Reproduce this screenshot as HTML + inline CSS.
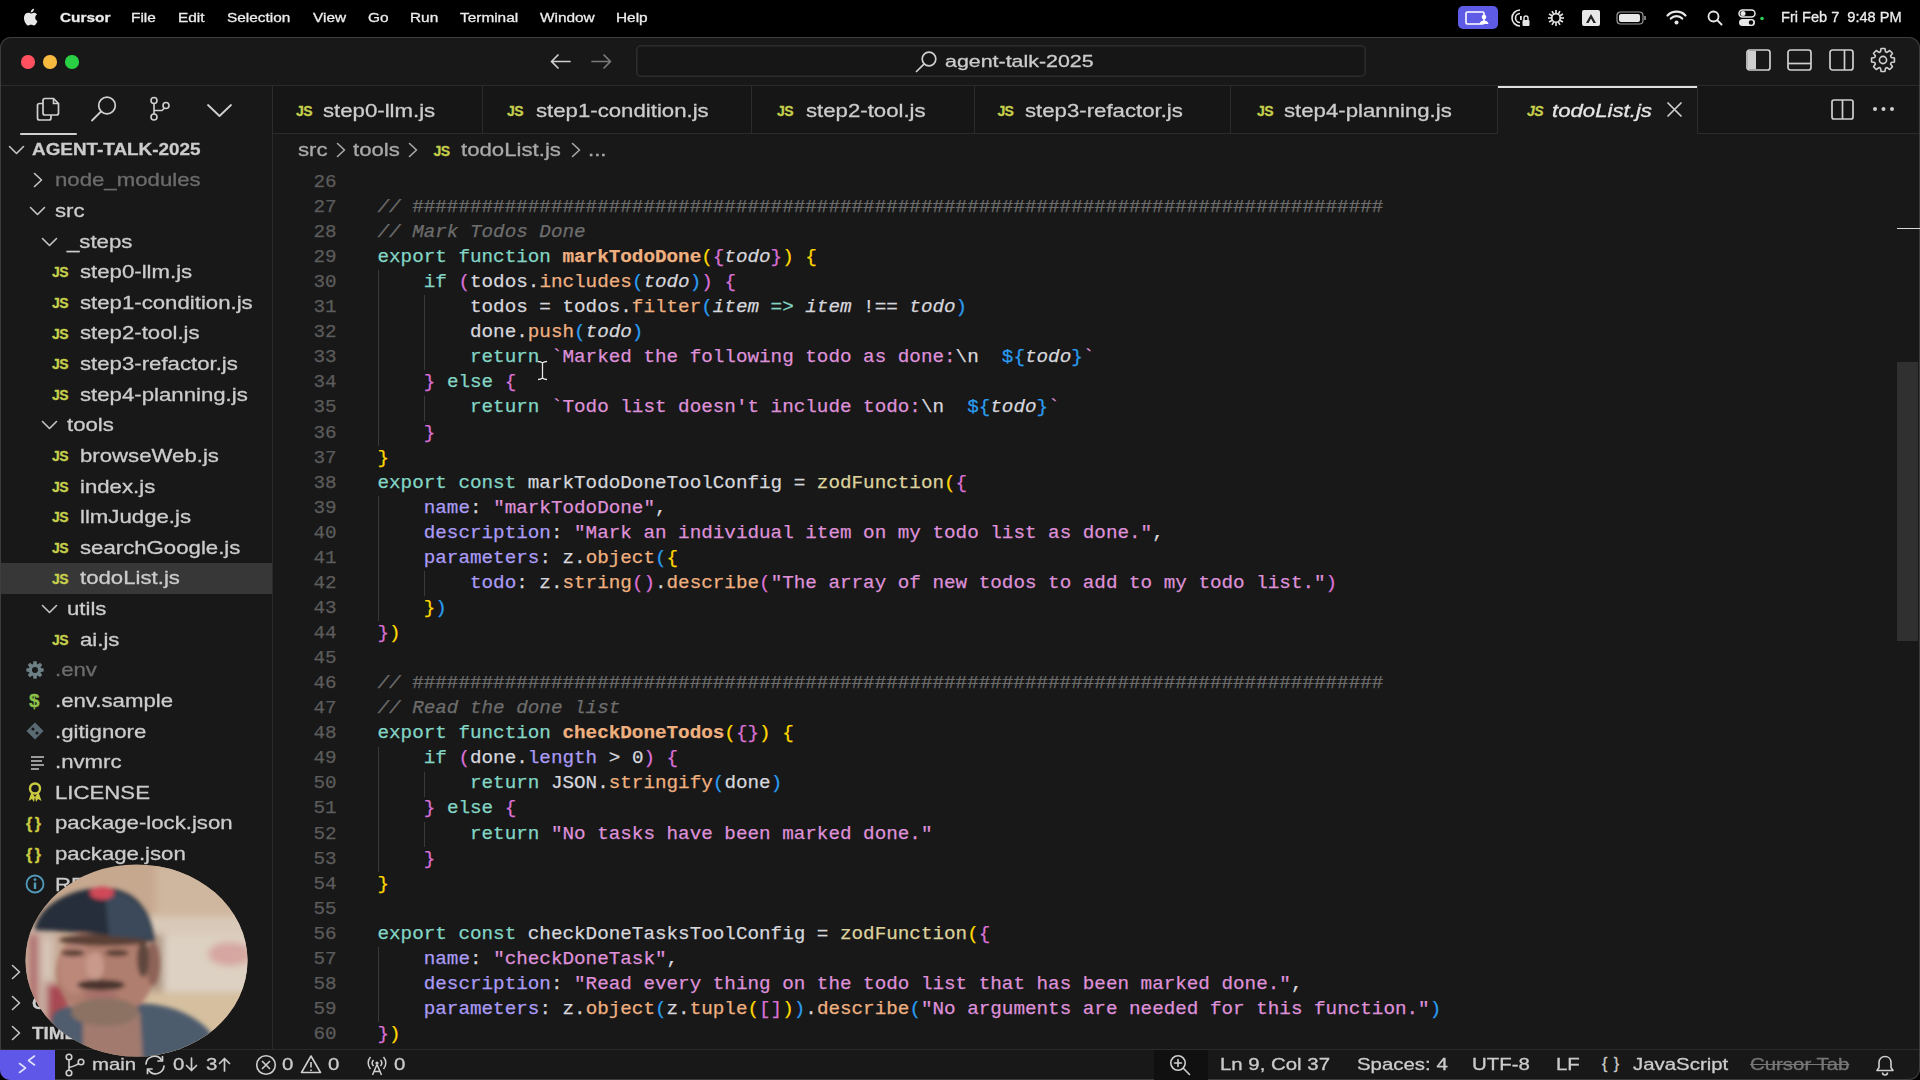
<!DOCTYPE html><html><head><meta charset="utf-8"><title>Cursor</title><style>
*{margin:0;padding:0;box-sizing:border-box;}
html,body{width:1920px;height:1080px;overflow:hidden;background:#000;}
body{position:relative;font-family:"Liberation Sans", sans-serif;}
.a{position:absolute;white-space:nowrap;transform-origin:0 50%;}
div.a{-webkit-text-stroke:0.3px currentColor;}
svg.a{overflow:visible;}
.code{-webkit-text-stroke:0.25px currentColor;font-family:"Liberation Mono", monospace;font-size:19.28px;line-height:25.07px;white-space:pre;color:#d6d6dd;}
.i{font-style:italic;}
.b{font-weight:700;}
</style></head><body><div class="a" style="left:0px;top:0px;width:1920px;height:38px;background:#000;"></div>
<svg class="a" style="left:22px;top:8px;" width="16" height="18" viewBox="0 0 16 18" fill="none"><path fill="#e8e8e8" d="M13.2 9.6c0-2.1 1.7-3.1 1.8-3.2-1-1.4-2.5-1.6-3-1.7-1.3-.1-2.5.8-3.1.8-.7 0-1.7-.8-2.8-.7C4.7 4.8 3.4 5.6 2.7 6.9c-1.5 2.6-.4 6.4 1.1 8.5.7 1 1.5 2.2 2.6 2.1 1 0 1.4-.7 2.7-.7 1.2 0 1.6.7 2.7.7 1.1 0 1.8-1 2.5-2 .8-1.2 1.1-2.3 1.1-2.4 0 0-2.2-.8-2.2-3.5zM11.1 3.3c.6-.7 1-1.7.9-2.6-.8 0-1.8.5-2.4 1.2-.5.6-1 1.6-.9 2.6.9.1 1.8-.5 2.4-1.2z"/></svg>
<div class="a" style="left:60.00px;top:10.87px;font-size:13.5px;line-height:13.5px;color:#ececec;font-weight:700;font-style:normal;transform:scaleX(1.14);">Cursor</div>
<div class="a" style="left:131.00px;top:10.87px;font-size:13.5px;line-height:13.5px;color:#ececec;font-weight:400;font-style:normal;transform:scaleX(1.14);">File</div>
<div class="a" style="left:178.00px;top:10.87px;font-size:13.5px;line-height:13.5px;color:#ececec;font-weight:400;font-style:normal;transform:scaleX(1.14);">Edit</div>
<div class="a" style="left:227.00px;top:10.87px;font-size:13.5px;line-height:13.5px;color:#ececec;font-weight:400;font-style:normal;transform:scaleX(1.14);">Selection</div>
<div class="a" style="left:313.00px;top:10.87px;font-size:13.5px;line-height:13.5px;color:#ececec;font-weight:400;font-style:normal;transform:scaleX(1.14);">View</div>
<div class="a" style="left:368.00px;top:10.87px;font-size:13.5px;line-height:13.5px;color:#ececec;font-weight:400;font-style:normal;transform:scaleX(1.14);">Go</div>
<div class="a" style="left:410.00px;top:10.87px;font-size:13.5px;line-height:13.5px;color:#ececec;font-weight:400;font-style:normal;transform:scaleX(1.14);">Run</div>
<div class="a" style="left:460.00px;top:10.87px;font-size:13.5px;line-height:13.5px;color:#ececec;font-weight:400;font-style:normal;transform:scaleX(1.14);">Terminal</div>
<div class="a" style="left:539.50px;top:10.87px;font-size:13.5px;line-height:13.5px;color:#ececec;font-weight:400;font-style:normal;transform:scaleX(1.14);">Window</div>
<div class="a" style="left:615.60px;top:10.87px;font-size:13.5px;line-height:13.5px;color:#ececec;font-weight:400;font-style:normal;transform:scaleX(1.14);">Help</div>
<div class="a" style="left:1458px;top:6px;width:40px;height:23px;background:#5e5ce6;border-radius:5px;"></div>
<svg class="a" style="left:1465px;top:11px;" width="26" height="14" viewBox="0 0 26 14" fill="none"><rect x="1" y="1" width="18" height="12" rx="1.5" stroke="#fff" stroke-width="1.6"/><circle cx="19" cy="6" r="2.3" fill="#fff"/><path d="M14.5 13c.5-2.5 2.3-3.6 4.5-3.6s4 1.1 4.5 3.6z" fill="#fff"/></svg>
<svg class="a" style="left:1510px;top:8px;" width="21" height="20" viewBox="0 0 21 20" fill="none"><path d="M10 2a8 8 0 1 0 0 16" stroke="#e6e6e6" stroke-width="1.6"/><path d="M10 5.5a4.5 4.5 0 1 0 0 9" stroke="#e6e6e6" stroke-width="1.6"/><rect x="10" y="8" width="1.8" height="4" fill="#e6e6e6"/><rect x="12.5" y="12" width="7" height="6" rx="1" fill="#e6e6e6"/><path d="M14 12v-2a2 2 0 0 1 4 0v2" stroke="#e6e6e6" stroke-width="1.4"/></svg>
<svg class="a" style="left:1547px;top:9px;" width="18" height="18" viewBox="0 0 18 18" fill="none"><line x1="9" y1="9" x2="17.00" y2="9.00" stroke="#e6e6e6" stroke-width="1.6"/><line x1="9" y1="9" x2="15.93" y2="13.00" stroke="#e6e6e6" stroke-width="1.6"/><line x1="9" y1="9" x2="13.00" y2="15.93" stroke="#e6e6e6" stroke-width="1.6"/><line x1="9" y1="9" x2="9.00" y2="17.00" stroke="#e6e6e6" stroke-width="1.6"/><line x1="9" y1="9" x2="5.00" y2="15.93" stroke="#e6e6e6" stroke-width="1.6"/><line x1="9" y1="9" x2="2.07" y2="13.00" stroke="#e6e6e6" stroke-width="1.6"/><line x1="9" y1="9" x2="1.00" y2="9.00" stroke="#e6e6e6" stroke-width="1.6"/><line x1="9" y1="9" x2="2.07" y2="5.00" stroke="#e6e6e6" stroke-width="1.6"/><line x1="9" y1="9" x2="5.00" y2="2.07" stroke="#e6e6e6" stroke-width="1.6"/><line x1="9" y1="9" x2="9.00" y2="1.00" stroke="#e6e6e6" stroke-width="1.6"/><line x1="9" y1="9" x2="13.00" y2="2.07" stroke="#e6e6e6" stroke-width="1.6"/><line x1="9" y1="9" x2="15.93" y2="5.00" stroke="#e6e6e6" stroke-width="1.6"/><circle cx="9" cy="9" r="4.2" fill="#000" stroke="#e6e6e6" stroke-width="1.6"/></svg>
<div class="a" style="left:1582px;top:10px;width:18px;height:16px;background:#e8e8e8;border-radius:2px;"></div>
<svg class="a" style="left:1584px;top:12px;" width="14" height="12" viewBox="0 0 14 12" fill="none"><path d="M2 11 L7 2 L12 11 L9.5 11 L7 6.5 L4.5 11z" fill="#222"/></svg>
<svg class="a" style="left:1616px;top:11px;" width="32" height="14" viewBox="0 0 32 14" fill="none"><rect x="1" y="1" width="26" height="12" rx="3.5" stroke="#9a9a9a" stroke-width="1.2"/><rect x="3" y="3" width="21" height="8" rx="2" fill="#e8e8e8"/><path d="M29 5v4" stroke="#9a9a9a" stroke-width="1.6"/></svg>
<svg class="a" style="left:1666px;top:9px;" width="21" height="16" viewBox="0 0 21 16" fill="none"><path d="M1.5 6.5a12.5 12.5 0 0 1 18 0" stroke="#e8e8e8" stroke-width="2.2" stroke-linecap="round"/><path d="M4.8 9.6a7.6 7.6 0 0 1 11.4 0" stroke="#e8e8e8" stroke-width="2.2" stroke-linecap="round"/><circle cx="10.5" cy="13.5" r="2" fill="#e8e8e8"/></svg>
<svg class="a" style="left:1707px;top:10px;" width="16" height="16" viewBox="0 0 16 16" fill="none"><circle cx="6.5" cy="6.5" r="5" stroke="#e8e8e8" stroke-width="1.8"/><path d="M10.2 10.2L14.5 14.5" stroke="#e8e8e8" stroke-width="1.9" stroke-linecap="round"/></svg>
<svg class="a" style="left:1738px;top:9px;" width="30" height="18" viewBox="0 0 30 18" fill="none"><rect x="1" y="1" width="16" height="7" rx="3.5" stroke="#e8e8e8" stroke-width="1.5"/><circle cx="5" cy="4.5" r="2.5" fill="#e8e8e8"/><rect x="1" y="10" width="16" height="7" rx="3.5" fill="#e8e8e8"/><circle cx="13" cy="13.5" r="2.2" fill="#000"/><circle cx="24" cy="9.5" r="1.8" fill="#2fd158"/></svg>
<div class="a" style="left:1780.50px;top:10.45px;font-size:14px;line-height:14px;color:#ececec;font-weight:400;font-style:normal;transform:scaleX(1.04);white-space:pre;">Fri Feb 7  9:48 PM</div>
<div class="a" style="left:0;top:37px;width:1920px;height:1043px;background:#181818;border-radius:11px;box-shadow:inset 0 0 0 1px #3d3d3d;"></div>
<div class="a" style="left:1px;top:85px;width:1918px;height:1px;background:#2b2b2b;"></div>
<div class="a" style="left:21.3px;top:55.2px;width:13.4px;height:13.4px;border-radius:50%;background:#ff5060;"></div>
<div class="a" style="left:43.3px;top:55.2px;width:13.4px;height:13.4px;border-radius:50%;background:#f7b93e;"></div>
<div class="a" style="left:65.3px;top:55.2px;width:13.4px;height:13.4px;border-radius:50%;background:#2ad043;"></div>
<svg class="a" style="left:549px;top:53px;" width="23" height="17" viewBox="0 0 23 17" fill="none"><path d="M21 8.5H2.5M9 2L2.5 8.5 9 15" stroke="#cfcfcf" stroke-width="1.7" stroke-linecap="round" stroke-linejoin="round"/></svg>
<svg class="a" style="left:590px;top:53px;" width="23" height="17" viewBox="0 0 23 17" fill="none"><path d="M2 8.5h18.5M14 2l6.5 6.5L14 15" stroke="#7a7a7a" stroke-width="1.7" stroke-linecap="round" stroke-linejoin="round"/></svg>
<div class="a" style="left:636px;top:44.5px;width:730px;height:32px;border-radius:5px;box-shadow:inset 0 0 0 1.6px #2c2c2c;background:#161616;"></div>
<svg class="a" style="left:914px;top:50px;" width="24" height="24" viewBox="0 0 24 24" fill="none"><circle cx="15" cy="9" r="6.8" stroke="#cfcfcf" stroke-width="1.7"/><path d="M10.2 13.8L2.5 21.5" stroke="#cfcfcf" stroke-width="1.7" stroke-linecap="round"/></svg>
<div class="a" style="left:945.30px;top:52.81px;font-size:17px;line-height:17px;color:#cccccc;font-weight:400;font-style:normal;transform:scaleX(1.258);">agent-talk-2025</div>
<svg class="a" style="left:1746px;top:49px;" width="25" height="22" viewBox="0 0 25 22" fill="none"><rect x="1" y="1" width="23" height="20" rx="2.5" stroke="#cfcfcf" stroke-width="1.7"/><rect x="2" y="2" width="8" height="18" fill="#cfcfcf"/></svg>
<svg class="a" style="left:1787px;top:49px;" width="25" height="22" viewBox="0 0 25 22" fill="none"><rect x="1" y="1" width="23" height="20" rx="2.5" stroke="#cfcfcf" stroke-width="1.7"/><path d="M1 14.5h23" stroke="#cfcfcf" stroke-width="1.7"/></svg>
<svg class="a" style="left:1829px;top:49px;" width="25" height="22" viewBox="0 0 25 22" fill="none"><rect x="1" y="1" width="23" height="20" rx="2.5" stroke="#cfcfcf" stroke-width="1.7"/><path d="M15.5 1v20" stroke="#cfcfcf" stroke-width="1.7"/></svg>
<svg class="a" style="left:1870px;top:47px;" width="26" height="26" viewBox="0 0 26 26" fill="none"><path d="M21.22 10.46 L24.43 11.04 L24.43 14.96 L21.22 15.54 L20.61 17.01 L22.47 19.70 L19.70 22.47 L17.01 20.61 L15.54 21.22 L14.96 24.43 L11.04 24.43 L10.46 21.22 L8.99 20.61 L6.30 22.47 L3.53 19.70 L5.39 17.01 L4.78 15.54 L1.57 14.96 L1.57 11.04 L4.78 10.46 L5.39 8.99 L3.53 6.30 L6.30 3.53 L8.99 5.39 L10.46 4.78 L11.04 1.57 L14.96 1.57 L15.54 4.78 L17.01 5.39 L19.70 3.53 L22.47 6.30 L20.61 8.99Z" stroke="#cfcfcf" stroke-width="1.6" stroke-linejoin="round"/><circle cx="13" cy="13" r="3.6" stroke="#cfcfcf" stroke-width="1.6"/></svg>
<div class="a" style="left:272px;top:86px;width:1px;height:963px;background:#2b2b2b;"></div>
<svg class="a" style="left:34px;top:93.5px;" width="27" height="27" viewBox="0 0 27 27" fill="none"><path d="M11 4.5h8.5l5 5V19a2 2 0 0 1-2 2H11a2 2 0 0 1-2-2V6.5a2 2 0 0 1 2-2z" stroke="#d0d0d0" stroke-width="1.7" stroke-linejoin="round"/><path d="M19.5 4.5v5h5" stroke="#d0d0d0" stroke-width="1.6"/><path d="M9 9.5H5.5a2 2 0 0 0-2 2V24a2 2 0 0 0 2 2H15a2 2 0 0 0 2-2v-3" stroke="#d0d0d0" stroke-width="1.7"/></svg>
<svg class="a" style="left:90px;top:96px;" width="28" height="26" viewBox="0 0 28 26" fill="none"><circle cx="17" cy="9.5" r="8.3" stroke="#d0d0d0" stroke-width="1.7"/><path d="M11 15.5L2 24.5" stroke="#d0d0d0" stroke-width="1.8" stroke-linecap="round"/></svg>
<svg class="a" style="left:147px;top:96px;" width="25" height="26" viewBox="0 0 25 26" fill="none"><circle cx="7" cy="4.5" r="3" stroke="#d0d0d0" stroke-width="1.6"/><circle cx="7" cy="21" r="3" stroke="#d0d0d0" stroke-width="1.6"/><circle cx="19" cy="9.5" r="3" stroke="#d0d0d0" stroke-width="1.6"/><path d="M7 7.5v10.5M17.5 12l-2.5 2.5H7.5" stroke="#d0d0d0" stroke-width="1.6" stroke-linejoin="round"/></svg>
<svg class="a" style="left:206px;top:103px;" width="27" height="15" viewBox="0 0 27 15" fill="none"><path d="M2 2l11.5 11L25 2" stroke="#d0d0d0" stroke-width="1.8" stroke-linecap="round" stroke-linejoin="round"/></svg>
<div class="a" style="left:20px;top:133px;width:57px;height:2px;background:#d0d0d0;border-radius:1px;"></div>
<div class="a" style="left:1px;top:563px;width:271px;height:31px;background:#373737;"></div>
<svg class="a" style="left:8px;top:145px;" width="17" height="10" viewBox="0 0 17 10" fill="none"><path d="M1.5 1.5l7 7 7-7" stroke="#c5c5c5" stroke-width="1.6" stroke-linecap="round" stroke-linejoin="round"/></svg>
<div class="a" style="left:32.00px;top:140.81px;font-size:17px;line-height:17px;color:#cccccc;font-weight:700;font-style:normal;transform:scaleX(1.11);">AGENT-TALK-2025</div>
<svg class="a" style="left:33px;top:172.42000000000002px;" width="11" height="16" viewBox="0 0 11 16" fill="none"><path d="M1.5 1.5l7 6.5-7 6.5" stroke="#c5c5c5" stroke-width="1.6" stroke-linecap="round" stroke-linejoin="round"/></svg>
<div class="a" style="left:55.00px;top:170.34px;font-size:19px;line-height:19px;color:#6c6c6c;font-weight:400;font-style:normal;transform:scaleX(1.168);">node_modules</div>
<svg class="a" style="left:29px;top:206.04000000000002px;" width="17" height="10" viewBox="0 0 17 10" fill="none"><path d="M1.5 1.5l7 7 7-7" stroke="#c5c5c5" stroke-width="1.6" stroke-linecap="round" stroke-linejoin="round"/></svg>
<div class="a" style="left:55.00px;top:200.96px;font-size:19px;line-height:19px;color:#cccccc;font-weight:400;font-style:normal;transform:scaleX(1.168);">src</div>
<svg class="a" style="left:41px;top:236.66000000000003px;" width="17" height="10" viewBox="0 0 17 10" fill="none"><path d="M1.5 1.5l7 7 7-7" stroke="#c5c5c5" stroke-width="1.6" stroke-linecap="round" stroke-linejoin="round"/></svg>
<div class="a" style="left:67.00px;top:231.58px;font-size:19px;line-height:19px;color:#cccccc;font-weight:400;font-style:normal;transform:scaleX(1.168);">_steps</div>
<div class="a" style="left:52px;top:265.43px;font-size:14px;line-height:14px;color:#c6cf4c;font-weight:700;letter-spacing:-0.6px;transform:scaleX(1.0);">JS</div>
<div class="a" style="left:80.00px;top:262.20px;font-size:19px;line-height:19px;color:#cccccc;font-weight:400;font-style:normal;transform:scaleX(1.168);">step0-llm.js</div>
<div class="a" style="left:52px;top:296.05px;font-size:14px;line-height:14px;color:#c6cf4c;font-weight:700;letter-spacing:-0.6px;transform:scaleX(1.0);">JS</div>
<div class="a" style="left:80.00px;top:292.82px;font-size:19px;line-height:19px;color:#cccccc;font-weight:400;font-style:normal;transform:scaleX(1.168);">step1-condition.js</div>
<div class="a" style="left:52px;top:326.67px;font-size:14px;line-height:14px;color:#c6cf4c;font-weight:700;letter-spacing:-0.6px;transform:scaleX(1.0);">JS</div>
<div class="a" style="left:80.00px;top:323.44px;font-size:19px;line-height:19px;color:#cccccc;font-weight:400;font-style:normal;transform:scaleX(1.168);">step2-tool.js</div>
<div class="a" style="left:52px;top:357.29px;font-size:14px;line-height:14px;color:#c6cf4c;font-weight:700;letter-spacing:-0.6px;transform:scaleX(1.0);">JS</div>
<div class="a" style="left:80.00px;top:354.06px;font-size:19px;line-height:19px;color:#cccccc;font-weight:400;font-style:normal;transform:scaleX(1.168);">step3-refactor.js</div>
<div class="a" style="left:52px;top:387.91px;font-size:14px;line-height:14px;color:#c6cf4c;font-weight:700;letter-spacing:-0.6px;transform:scaleX(1.0);">JS</div>
<div class="a" style="left:80.00px;top:384.68px;font-size:19px;line-height:19px;color:#cccccc;font-weight:400;font-style:normal;transform:scaleX(1.168);">step4-planning.js</div>
<svg class="a" style="left:41px;top:420.38px;" width="17" height="10" viewBox="0 0 17 10" fill="none"><path d="M1.5 1.5l7 7 7-7" stroke="#c5c5c5" stroke-width="1.6" stroke-linecap="round" stroke-linejoin="round"/></svg>
<div class="a" style="left:67.00px;top:415.30px;font-size:19px;line-height:19px;color:#cccccc;font-weight:400;font-style:normal;transform:scaleX(1.168);">tools</div>
<div class="a" style="left:52px;top:449.15px;font-size:14px;line-height:14px;color:#c6cf4c;font-weight:700;letter-spacing:-0.6px;transform:scaleX(1.0);">JS</div>
<div class="a" style="left:80.00px;top:445.92px;font-size:19px;line-height:19px;color:#cccccc;font-weight:400;font-style:normal;transform:scaleX(1.168);">browseWeb.js</div>
<div class="a" style="left:52px;top:479.77px;font-size:14px;line-height:14px;color:#c6cf4c;font-weight:700;letter-spacing:-0.6px;transform:scaleX(1.0);">JS</div>
<div class="a" style="left:80.00px;top:476.54px;font-size:19px;line-height:19px;color:#cccccc;font-weight:400;font-style:normal;transform:scaleX(1.168);">index.js</div>
<div class="a" style="left:52px;top:510.39px;font-size:14px;line-height:14px;color:#c6cf4c;font-weight:700;letter-spacing:-0.6px;transform:scaleX(1.0);">JS</div>
<div class="a" style="left:80.00px;top:507.16px;font-size:19px;line-height:19px;color:#cccccc;font-weight:400;font-style:normal;transform:scaleX(1.168);">llmJudge.js</div>
<div class="a" style="left:52px;top:541.01px;font-size:14px;line-height:14px;color:#c6cf4c;font-weight:700;letter-spacing:-0.6px;transform:scaleX(1.0);">JS</div>
<div class="a" style="left:80.00px;top:537.78px;font-size:19px;line-height:19px;color:#cccccc;font-weight:400;font-style:normal;transform:scaleX(1.168);">searchGoogle.js</div>
<div class="a" style="left:52px;top:571.63px;font-size:14px;line-height:14px;color:#c6cf4c;font-weight:700;letter-spacing:-0.6px;transform:scaleX(1.0);">JS</div>
<div class="a" style="left:80.00px;top:568.40px;font-size:19px;line-height:19px;color:#cccccc;font-weight:400;font-style:normal;transform:scaleX(1.168);">todoList.js</div>
<svg class="a" style="left:41px;top:604.1px;" width="17" height="10" viewBox="0 0 17 10" fill="none"><path d="M1.5 1.5l7 7 7-7" stroke="#c5c5c5" stroke-width="1.6" stroke-linecap="round" stroke-linejoin="round"/></svg>
<div class="a" style="left:67.00px;top:599.02px;font-size:19px;line-height:19px;color:#cccccc;font-weight:400;font-style:normal;transform:scaleX(1.168);">utils</div>
<div class="a" style="left:52px;top:632.87px;font-size:14px;line-height:14px;color:#c6cf4c;font-weight:700;letter-spacing:-0.6px;transform:scaleX(1.0);">JS</div>
<div class="a" style="left:80.00px;top:629.64px;font-size:19px;line-height:19px;color:#cccccc;font-weight:400;font-style:normal;transform:scaleX(1.168);">ai.js</div>
<svg class="a" style="left:25px;top:660px;" width="20" height="20" viewBox="0 0 20 20" fill="none"><path d="M15.89 8.05 L18.66 8.42 L18.66 11.58 L15.89 11.95 L15.54 12.78 L17.24 15.01 L15.01 17.24 L12.78 15.54 L11.95 15.89 L11.58 18.66 L8.42 18.66 L8.05 15.89 L7.22 15.54 L4.99 17.24 L2.76 15.01 L4.46 12.78 L4.11 11.95 L1.34 11.58 L1.34 8.42 L4.11 8.05 L4.46 7.22 L2.76 4.99 L4.99 2.76 L7.22 4.46 L8.05 4.11 L8.42 1.34 L11.58 1.34 L11.95 4.11 L12.78 4.46 L15.01 2.76 L17.24 4.99 L15.54 7.22Z" fill="#6d8086"/><circle cx="10" cy="10" r="3" fill="#181818"/></svg>
<div class="a" style="left:55.00px;top:660.26px;font-size:19px;line-height:19px;color:#6c6c6c;font-weight:400;font-style:normal;transform:scaleX(1.168);">.env</div>
<div class="a" style="left:29.00px;top:690.88px;font-size:19px;line-height:19px;color:#8dc149;font-weight:700;font-style:normal;transform:scaleX(1.0);">$</div>
<div class="a" style="left:55.00px;top:690.88px;font-size:19px;line-height:19px;color:#cccccc;font-weight:400;font-style:normal;transform:scaleX(1.168);">.env.sample</div>
<svg class="a" style="left:25px;top:721px;" width="20" height="20" viewBox="0 0 20 20" fill="none"><path d="M10 1.5L18.5 10 10 18.5 1.5 10z" fill="#5a6a72"/><circle cx="8" cy="8" r="1.6" fill="#181818"/><circle cx="12" cy="12" r="1.6" fill="#181818"/></svg>
<div class="a" style="left:55.00px;top:721.50px;font-size:19px;line-height:19px;color:#cccccc;font-weight:400;font-style:normal;transform:scaleX(1.168);">.gitignore</div>
<svg class="a" style="left:30px;top:754px;" width="16" height="16" viewBox="0 0 16 16" fill="none"><path d="M1 3h13M1 7h11M1 11h13M1 15h8" stroke="#c5c5c5" stroke-width="1.6"/></svg>
<div class="a" style="left:55.00px;top:752.12px;font-size:19px;line-height:19px;color:#cccccc;font-weight:400;font-style:normal;transform:scaleX(1.168);">.nvmrc</div>
<svg class="a" style="left:27px;top:782px;" width="16" height="21" viewBox="0 0 16 21" fill="none"><circle cx="8" cy="6.5" r="5" stroke="#cbcb41" stroke-width="2.4"/><path d="M4.5 10l-3 9 3.5-2 2 3 1-5M11.5 10l3 9-3.5-2-2 3-1-5" fill="#cbcb41"/></svg>
<div class="a" style="left:55.00px;top:782.74px;font-size:19px;line-height:19px;color:#cccccc;font-weight:400;font-style:normal;transform:scaleX(1.168);">LICENSE</div>
<div class="a" style="left:26.00px;top:815.90px;font-size:16px;line-height:16px;color:#cbcb41;font-weight:700;font-style:normal;transform:scaleX(1.0);white-space:pre;letter-spacing:-1px;">{ }</div>
<div class="a" style="left:55.00px;top:813.36px;font-size:19px;line-height:19px;color:#cccccc;font-weight:400;font-style:normal;transform:scaleX(1.168);">package-lock.json</div>
<div class="a" style="left:26.00px;top:846.52px;font-size:16px;line-height:16px;color:#cbcb41;font-weight:700;font-style:normal;transform:scaleX(1.0);white-space:pre;letter-spacing:-1px;">{ }</div>
<div class="a" style="left:55.00px;top:843.98px;font-size:19px;line-height:19px;color:#cccccc;font-weight:400;font-style:normal;transform:scaleX(1.168);">package.json</div>
<svg class="a" style="left:25px;top:874px;" width="20" height="20" viewBox="0 0 20 20" fill="none"><circle cx="10" cy="10" r="8.5" stroke="#519aba" stroke-width="1.8"/><circle cx="10" cy="5.6" r="1.4" fill="#519aba"/><path d="M10 8.5v6.5" stroke="#519aba" stroke-width="2.4"/></svg>
<div class="a" style="left:55.00px;top:874.60px;font-size:19px;line-height:19px;color:#cccccc;font-weight:400;font-style:normal;transform:scaleX(1.168);">README.md</div>
<svg class="a" style="left:11px;top:964px;" width="11" height="16" viewBox="0 0 11 16" fill="none"><path d="M1.5 1.5l7 6.5-7 6.5" stroke="#c5c5c5" stroke-width="1.6" stroke-linecap="round" stroke-linejoin="round"/></svg>
<div class="a" style="left:32.00px;top:963.61px;font-size:17px;line-height:17px;color:#cccccc;font-weight:700;font-style:normal;transform:scaleX(1.11);">OUTLINE</div>
<svg class="a" style="left:11px;top:995px;" width="11" height="16" viewBox="0 0 11 16" fill="none"><path d="M1.5 1.5l7 6.5-7 6.5" stroke="#c5c5c5" stroke-width="1.6" stroke-linecap="round" stroke-linejoin="round"/></svg>
<div class="a" style="left:32.00px;top:994.61px;font-size:17px;line-height:17px;color:#cccccc;font-weight:700;font-style:normal;transform:scaleX(1.11);">OPEN EDITORS</div>
<svg class="a" style="left:11px;top:1025px;" width="11" height="16" viewBox="0 0 11 16" fill="none"><path d="M1.5 1.5l7 6.5-7 6.5" stroke="#c5c5c5" stroke-width="1.6" stroke-linecap="round" stroke-linejoin="round"/></svg>
<div class="a" style="left:32.00px;top:1024.61px;font-size:17px;line-height:17px;color:#cccccc;font-weight:700;font-style:normal;transform:scaleX(1.11);">TIMELINE</div>
<div class="a" style="left:273px;top:86px;width:1645px;height:47px;background:#161616;"></div>
<div class="a" style="left:273px;top:133px;width:1225px;height:1px;background:#2b2b2b;"></div>
<div class="a" style="left:1697px;top:133px;width:222px;height:1px;background:#2b2b2b;"></div>
<div class="a" style="left:1498px;top:86px;width:199px;height:48px;background:#181818;"></div>
<div class="a" style="left:1498px;top:86px;width:199px;height:2px;background:#e0e0e0;"></div>
<div class="a" style="left:482px;top:86px;width:1px;height:47px;background:#2b2b2b;"></div>
<div class="a" style="left:296px;top:104.15px;font-size:14px;line-height:14px;color:#c6cf4c;font-weight:700;letter-spacing:-0.6px;transform:scaleX(1.0);">JS</div>
<div class="a" style="left:323.40px;top:100.92px;font-size:19px;line-height:19px;color:#cccccc;font-weight:400;font-style:normal;transform:scaleX(1.168);">step0-llm.js</div>
<div class="a" style="left:751px;top:86px;width:1px;height:47px;background:#2b2b2b;"></div>
<div class="a" style="left:507px;top:104.15px;font-size:14px;line-height:14px;color:#c6cf4c;font-weight:700;letter-spacing:-0.6px;transform:scaleX(1.0);">JS</div>
<div class="a" style="left:535.60px;top:100.92px;font-size:19px;line-height:19px;color:#cccccc;font-weight:400;font-style:normal;transform:scaleX(1.168);">step1-condition.js</div>
<div class="a" style="left:974px;top:86px;width:1px;height:47px;background:#2b2b2b;"></div>
<div class="a" style="left:777px;top:104.15px;font-size:14px;line-height:14px;color:#c6cf4c;font-weight:700;letter-spacing:-0.6px;transform:scaleX(1.0);">JS</div>
<div class="a" style="left:806.00px;top:100.92px;font-size:19px;line-height:19px;color:#cccccc;font-weight:400;font-style:normal;transform:scaleX(1.168);">step2-tool.js</div>
<div class="a" style="left:1230px;top:86px;width:1px;height:47px;background:#2b2b2b;"></div>
<div class="a" style="left:997.4px;top:104.15px;font-size:14px;line-height:14px;color:#c6cf4c;font-weight:700;letter-spacing:-0.6px;transform:scaleX(1.0);">JS</div>
<div class="a" style="left:1025.00px;top:100.92px;font-size:19px;line-height:19px;color:#cccccc;font-weight:400;font-style:normal;transform:scaleX(1.168);">step3-refactor.js</div>
<div class="a" style="left:1497px;top:86px;width:1px;height:47px;background:#2b2b2b;"></div>
<div class="a" style="left:1257px;top:104.15px;font-size:14px;line-height:14px;color:#c6cf4c;font-weight:700;letter-spacing:-0.6px;transform:scaleX(1.0);">JS</div>
<div class="a" style="left:1284.00px;top:100.92px;font-size:19px;line-height:19px;color:#cccccc;font-weight:400;font-style:normal;transform:scaleX(1.168);">step4-planning.js</div>
<div class="a" style="left:1697px;top:86px;width:1px;height:47px;background:#2b2b2b;"></div>
<div class="a" style="left:1527px;top:104.15px;font-size:14px;line-height:14px;color:#c6cf4c;font-weight:700;letter-spacing:-0.6px;transform:scaleX(1.0);font-style:italic;">JS</div>
<div class="a" style="left:1551.60px;top:100.92px;font-size:19px;line-height:19px;color:#e6e6e6;font-weight:400;font-style:italic;transform:scaleX(1.168);">todoList.js</div>
<svg class="a" style="left:1666px;top:101px;" width="17" height="17" viewBox="0 0 17 17" fill="none"><path d="M2 2l13 13M15 2L2 15" stroke="#d0d0d0" stroke-width="1.7" stroke-linecap="round"/></svg>
<svg class="a" style="left:1831px;top:99px;" width="23" height="21" viewBox="0 0 23 21" fill="none"><rect x="1" y="1" width="21" height="19" rx="2" stroke="#cfcfcf" stroke-width="1.7"/><path d="M11.5 1v19" stroke="#cfcfcf" stroke-width="1.7"/></svg>
<svg class="a" style="left:1872px;top:106px;" width="23" height="6" viewBox="0 0 23 6" fill="none"><circle cx="3" cy="3" r="2" fill="#cfcfcf"/><circle cx="11.5" cy="3" r="2" fill="#cfcfcf"/><circle cx="20" cy="3" r="2" fill="#cfcfcf"/></svg>
<div class="a" style="left:298.00px;top:139.92px;font-size:19px;line-height:19px;color:#a9a9a9;font-weight:400;font-style:normal;transform:scaleX(1.168);">src</div>
<svg class="a" style="left:336px;top:142px;" width="11" height="16" viewBox="0 0 11 16" fill="none"><path d="M1.5 1.5l7 6.5-7 6.5" stroke="#a9a9a9" stroke-width="1.6" stroke-linecap="round" stroke-linejoin="round"/></svg>
<div class="a" style="left:353.00px;top:139.92px;font-size:19px;line-height:19px;color:#a9a9a9;font-weight:400;font-style:normal;transform:scaleX(1.168);">tools</div>
<svg class="a" style="left:408px;top:142px;" width="11" height="16" viewBox="0 0 11 16" fill="none"><path d="M1.5 1.5l7 6.5-7 6.5" stroke="#a9a9a9" stroke-width="1.6" stroke-linecap="round" stroke-linejoin="round"/></svg>
<div class="a" style="left:433.5px;top:143.65px;font-size:14px;line-height:14px;color:#c6cf4c;font-weight:700;letter-spacing:-0.6px;transform:scaleX(1.0);">JS</div>
<div class="a" style="left:461.40px;top:139.92px;font-size:19px;line-height:19px;color:#a9a9a9;font-weight:400;font-style:normal;transform:scaleX(1.168);">todoList.js</div>
<svg class="a" style="left:571px;top:142px;" width="11" height="16" viewBox="0 0 11 16" fill="none"><path d="M1.5 1.5l7 6.5-7 6.5" stroke="#a9a9a9" stroke-width="1.6" stroke-linecap="round" stroke-linejoin="round"/></svg>
<div class="a" style="left:588.00px;top:139.92px;font-size:19px;line-height:19px;color:#a9a9a9;font-weight:400;font-style:normal;transform:scaleX(1.168);">...</div>
<div class="a" style="left:378.0px;top:270.2px;width:1px;height:175.5px;background:#3a3a3a;"></div>
<div class="a" style="left:424.0px;top:295.2px;width:1px;height:75.2px;background:#3a3a3a;"></div>
<div class="a" style="left:424.0px;top:395.5px;width:1px;height:25.1px;background:#3a3a3a;"></div>
<div class="a" style="left:378.0px;top:495.8px;width:1px;height:125.3px;background:#3a3a3a;"></div>
<div class="a" style="left:424.0px;top:571.0px;width:1px;height:25.1px;background:#3a3a3a;"></div>
<div class="a" style="left:378.0px;top:746.5px;width:1px;height:125.4px;background:#3a3a3a;"></div>
<div class="a" style="left:424.0px;top:771.6px;width:1px;height:25.1px;background:#3a3a3a;"></div>
<div class="a" style="left:424.0px;top:821.7px;width:1px;height:25.1px;background:#3a3a3a;"></div>
<div class="a" style="left:378.0px;top:947.1px;width:1px;height:75.2px;background:#3a3a3a;"></div>
<pre class="a code" style="left:377.5px;top:169.9px;">

<span style="color:#6d6d6d" class="i">// </span><span style="color:#6d6d6d">####################################################################################</span>
<span style="color:#6d6d6d" class="i">// Mark Todos Done</span>
<span style="color:#83d6c5">export function </span><span style="color:#efb080" class="b">markTodoDone</span><span style="color:#ffd700">(</span><span style="color:#da70d6">{</span><span style="color:#d6d6dd" class="i">todo</span><span style="color:#da70d6">}</span><span style="color:#ffd700">)</span><span style="color:#d6d6dd"> </span><span style="color:#ffd700">{</span>
<span style="color:#d6d6dd">    </span><span style="color:#83d6c5">if </span><span style="color:#da70d6">(</span><span style="color:#d6d6dd">todos.</span><span style="color:#efb080">includes</span><span style="color:#2a9cf0">(</span><span style="color:#d6d6dd" class="i">todo</span><span style="color:#2a9cf0">)</span><span style="color:#da70d6">)</span><span style="color:#d6d6dd"> </span><span style="color:#da70d6">{</span>
<span style="color:#d6d6dd">        todos = todos.</span><span style="color:#efb080">filter</span><span style="color:#2a9cf0">(</span><span style="color:#d6d6dd" class="i">item</span><span style="color:#d6d6dd"> </span><span style="color:#83d6c5">=&gt;</span><span style="color:#d6d6dd"> </span><span style="color:#d6d6dd" class="i">item</span><span style="color:#d6d6dd"> !== </span><span style="color:#d6d6dd" class="i">todo</span><span style="color:#2a9cf0">)</span>
<span style="color:#d6d6dd">        done.</span><span style="color:#efb080">push</span><span style="color:#2a9cf0">(</span><span style="color:#d6d6dd" class="i">todo</span><span style="color:#2a9cf0">)</span>
<span style="color:#d6d6dd">        </span><span style="color:#83d6c5">return </span><span style="color:#de90d8">`Marked the following todo as done:</span><span style="color:#d6d6dd">\n  </span><span style="color:#2a9cf0">${</span><span style="color:#d6d6dd" class="i">todo</span><span style="color:#2a9cf0">}</span><span style="color:#de90d8">`</span>
<span style="color:#d6d6dd">    </span><span style="color:#da70d6">}</span><span style="color:#d6d6dd"> </span><span style="color:#83d6c5">else </span><span style="color:#da70d6">{</span>
<span style="color:#d6d6dd">        </span><span style="color:#83d6c5">return </span><span style="color:#de90d8">`Todo list doesn&#x27;t include todo:</span><span style="color:#d6d6dd">\n  </span><span style="color:#2a9cf0">${</span><span style="color:#d6d6dd" class="i">todo</span><span style="color:#2a9cf0">}</span><span style="color:#de90d8">`</span>
<span style="color:#d6d6dd">    </span><span style="color:#da70d6">}</span>
<span style="color:#ffd700">}</span>
<span style="color:#83d6c5">export const </span><span style="color:#d6d6dd">markTodoDoneToolConfig = </span><span style="color:#dcd29c">zodFunction</span><span style="color:#ffd700">(</span><span style="color:#da70d6">{</span>
<span style="color:#d6d6dd">    </span><span style="color:#aa9bf5">name</span><span style="color:#d6d6dd">: </span><span style="color:#de90d8">&quot;markTodoDone&quot;</span><span style="color:#d6d6dd">,</span>
<span style="color:#d6d6dd">    </span><span style="color:#aa9bf5">description</span><span style="color:#d6d6dd">: </span><span style="color:#de90d8">&quot;Mark an individual item on my todo list as done.&quot;</span><span style="color:#d6d6dd">,</span>
<span style="color:#d6d6dd">    </span><span style="color:#aa9bf5">parameters</span><span style="color:#d6d6dd">: z.</span><span style="color:#efb080">object</span><span style="color:#2a9cf0">(</span><span style="color:#ffd700">{</span>
<span style="color:#d6d6dd">        </span><span style="color:#aa9bf5">todo</span><span style="color:#d6d6dd">: z.</span><span style="color:#efb080">string</span><span style="color:#da70d6">()</span><span style="color:#d6d6dd">.</span><span style="color:#efb080">describe</span><span style="color:#da70d6">(</span><span style="color:#de90d8">&quot;The array of new todos to add to my todo list.&quot;</span><span style="color:#da70d6">)</span>
<span style="color:#d6d6dd">    </span><span style="color:#ffd700">}</span><span style="color:#2a9cf0">)</span>
<span style="color:#da70d6">}</span><span style="color:#ffd700">)</span>

<span style="color:#6d6d6d" class="i">// </span><span style="color:#6d6d6d">####################################################################################</span>
<span style="color:#6d6d6d" class="i">// Read the done list</span>
<span style="color:#83d6c5">export function </span><span style="color:#efb080" class="b">checkDoneTodos</span><span style="color:#ffd700">(</span><span style="color:#da70d6">{}</span><span style="color:#ffd700">)</span><span style="color:#d6d6dd"> </span><span style="color:#ffd700">{</span>
<span style="color:#d6d6dd">    </span><span style="color:#83d6c5">if </span><span style="color:#da70d6">(</span><span style="color:#d6d6dd">done.</span><span style="color:#aa9bf5">length</span><span style="color:#d6d6dd"> &gt; </span><span style="color:#d6d6dd">0</span><span style="color:#da70d6">)</span><span style="color:#d6d6dd"> </span><span style="color:#da70d6">{</span>
<span style="color:#d6d6dd">        </span><span style="color:#83d6c5">return </span><span style="color:#d6d6dd">JSON.</span><span style="color:#efb080">stringify</span><span style="color:#2a9cf0">(</span><span style="color:#d6d6dd">done</span><span style="color:#2a9cf0">)</span>
<span style="color:#d6d6dd">    </span><span style="color:#da70d6">}</span><span style="color:#d6d6dd"> </span><span style="color:#83d6c5">else </span><span style="color:#da70d6">{</span>
<span style="color:#d6d6dd">        </span><span style="color:#83d6c5">return </span><span style="color:#de90d8">&quot;No tasks have been marked done.&quot;</span>
<span style="color:#d6d6dd">    </span><span style="color:#da70d6">}</span>
<span style="color:#ffd700">}</span>

<span style="color:#83d6c5">export const </span><span style="color:#d6d6dd">checkDoneTasksToolConfig = </span><span style="color:#dcd29c">zodFunction</span><span style="color:#ffd700">(</span><span style="color:#da70d6">{</span>
<span style="color:#d6d6dd">    </span><span style="color:#aa9bf5">name</span><span style="color:#d6d6dd">: </span><span style="color:#de90d8">&quot;checkDoneTask&quot;</span><span style="color:#d6d6dd">,</span>
<span style="color:#d6d6dd">    </span><span style="color:#aa9bf5">description</span><span style="color:#d6d6dd">: </span><span style="color:#de90d8">&quot;Read every thing on the todo list that has been marked done.&quot;</span><span style="color:#d6d6dd">,</span>
<span style="color:#d6d6dd">    </span><span style="color:#aa9bf5">parameters</span><span style="color:#d6d6dd">: z.</span><span style="color:#efb080">object</span><span style="color:#2a9cf0">(</span><span style="color:#d6d6dd">z.</span><span style="color:#efb080">tuple</span><span style="color:#ffd700">(</span><span style="color:#da70d6">[]</span><span style="color:#ffd700">)</span><span style="color:#2a9cf0">)</span><span style="color:#d6d6dd">.</span><span style="color:#efb080">describe</span><span style="color:#2a9cf0">(</span><span style="color:#de90d8">&quot;No arguments are needed for this function.&quot;</span><span style="color:#2a9cf0">)</span>
<span style="color:#da70d6">}</span><span style="color:#ffd700">)</span></pre>
<pre class="a code" style="left:236.5px;width:100px;text-align:right;top:169.9px;color:#5c5c5c;">
26
27
28
29
30
31
32
33
34
35
36
37
38
39
40
41
42
43
44
45
46
47
48
49
50
51
52
53
54
55
56
57
58
59
60</pre>
<svg class="a" style="left:536px;top:360px;" width="13" height="21" viewBox="0 0 13 21" fill="none"><path d="M2 1.5c2 0 3.5.5 4.5 1.5 1-1 2.5-1.5 4.5-1.5M2 19.5c2 0 3.5-.5 4.5-1.5 1 1 2.5 1.5 4.5 1.5M6.5 3v15" stroke="#111" stroke-width="3"/><path d="M2 1.5c2 0 3.5.5 4.5 1.5 1-1 2.5-1.5 4.5-1.5M2 19.5c2 0 3.5-.5 4.5-1.5 1 1 2.5 1.5 4.5 1.5M6.5 3v15" stroke="#e8e8e8" stroke-width="1.3"/></svg>
<div class="a" style="left:1897px;top:227.5px;width:23px;height:1.8px;background:#d8d8d8;"></div>
<div class="a" style="left:1897px;top:362px;width:21px;height:279px;background:#303030;"></div>
<div class="a" style="left:1px;top:1049px;width:1918px;height:1px;background:#2b2b2b;"></div>
<div class="a" style="left:0;top:1050px;width:55px;height:30px;background:#5f57e8;border-bottom-left-radius:10px;"></div>
<svg class="a" style="left:17px;top:1055px;" width="20" height="18" viewBox="0 0 20 18" fill="none"><path d="M2.5 8.5l6 4.5-6 4.5" stroke="#e0e0ff" stroke-width="1.6" stroke-linecap="round" stroke-linejoin="round"/><path d="M17.5 1l-6 4.5 6 4.5" stroke="#e0e0ff" stroke-width="1.6" stroke-linecap="round" stroke-linejoin="round"/></svg>
<svg class="a" style="left:64px;top:1053px;" width="22" height="24" viewBox="0 0 22 24" fill="none"><circle cx="5" cy="4" r="2.8" stroke="#cfcfcf" stroke-width="1.6"/><circle cx="5" cy="20" r="2.8" stroke="#cfcfcf" stroke-width="1.6"/><circle cx="17" cy="9" r="2.8" stroke="#cfcfcf" stroke-width="1.6"/><path d="M5 7v10M14.5 10.5c-2 2-5 3-9.5 4" stroke="#cfcfcf" stroke-width="1.6"/></svg>
<div class="a" style="left:92.00px;top:1056.21px;font-size:17px;line-height:17px;color:#cccccc;font-weight:400;font-style:normal;transform:scaleX(1.2);">main</div>
<svg class="a" style="left:143px;top:1055px;" width="24" height="20" viewBox="0 0 24 20" fill="none"><path d="M3 9a8.5 8.5 0 0 1 15.5-4M21 11a8.5 8.5 0 0 1-15.5 4" stroke="#cfcfcf" stroke-width="1.7" stroke-linecap="round"/><path d="M19.5 1.5v4.5h-4.5M4.5 18.5V14h4.5" stroke="#cfcfcf" stroke-width="1.7" stroke-linecap="round" stroke-linejoin="round"/></svg>
<div class="a" style="left:173.00px;top:1056.21px;font-size:17px;line-height:17px;color:#cccccc;font-weight:400;font-style:normal;transform:scaleX(1.2);">0</div>
<svg class="a" style="left:185px;top:1057px;" width="13" height="15" viewBox="0 0 13 15" fill="none"><path d="M6.5 1v12.5M1.5 8.5l5 5 5-5" stroke="#cccccc" stroke-width="1.7" stroke-linecap="round" stroke-linejoin="round"/></svg>
<div class="a" style="left:205.60px;top:1056.21px;font-size:17px;line-height:17px;color:#cccccc;font-weight:400;font-style:normal;transform:scaleX(1.2);">3</div>
<svg class="a" style="left:218px;top:1057px;" width="13" height="15" viewBox="0 0 13 15" fill="none"><path d="M6.5 14V1.5M1.5 6.5l5-5 5 5" stroke="#cccccc" stroke-width="1.7" stroke-linecap="round" stroke-linejoin="round"/></svg>
<svg class="a" style="left:255px;top:1054px;" width="22" height="22" viewBox="0 0 22 22" fill="none"><circle cx="11" cy="11" r="9.3" stroke="#cfcfcf" stroke-width="1.6"/><path d="M7 7l8 8M15 7l-8 8" stroke="#cfcfcf" stroke-width="1.6"/></svg>
<div class="a" style="left:282.00px;top:1056.21px;font-size:17px;line-height:17px;color:#cccccc;font-weight:400;font-style:normal;transform:scaleX(1.2);">0</div>
<svg class="a" style="left:300px;top:1054px;" width="22" height="20" viewBox="0 0 22 20" fill="none"><path d="M11 2L20.5 18.5H1.5z" stroke="#cfcfcf" stroke-width="1.6" stroke-linejoin="round"/><path d="M11 8v5.5M11 15.5v1.5" stroke="#cfcfcf" stroke-width="1.6"/></svg>
<div class="a" style="left:328.00px;top:1056.21px;font-size:17px;line-height:17px;color:#cccccc;font-weight:400;font-style:normal;transform:scaleX(1.2);">0</div>
<svg class="a" style="left:366px;top:1054px;" width="22" height="22" viewBox="0 0 22 22" fill="none"><path d="M4.5 3a9 9 0 0 0 0 12M17.5 3a9 9 0 0 1 0 12M7.5 6a4.5 4.5 0 0 0 0 6M14.5 6a4.5 4.5 0 0 1 0 6" stroke="#cfcfcf" stroke-width="1.5"/><circle cx="11" cy="9" r="1.6" fill="#cfcfcf"/><path d="M11 10.5L6.5 21M11 10.5l4.5 10.5M8 17.5h6" stroke="#cfcfcf" stroke-width="1.5"/></svg>
<div class="a" style="left:394.00px;top:1056.21px;font-size:17px;line-height:17px;color:#cccccc;font-weight:400;font-style:normal;transform:scaleX(1.2);">0</div>
<div class="a" style="left:1154px;top:1050px;width:54px;height:30px;background:#101010;"></div>
<svg class="a" style="left:1169px;top:1054px;" width="22" height="22" viewBox="0 0 22 22" fill="none"><circle cx="9" cy="9" r="7.2" stroke="#cfcfcf" stroke-width="1.6"/><path d="M14.3 14.3L20.5 20.5M9 5.5v7M5.5 9h7" stroke="#cfcfcf" stroke-width="1.6" stroke-linecap="round"/></svg>
<div class="a" style="left:1220.00px;top:1056.21px;font-size:17px;line-height:17px;color:#cccccc;font-weight:400;font-style:normal;transform:scaleX(1.2);">Ln 9, Col 37</div>
<div class="a" style="left:1356.50px;top:1056.21px;font-size:17px;line-height:17px;color:#cccccc;font-weight:400;font-style:normal;transform:scaleX(1.2);">Spaces: 4</div>
<div class="a" style="left:1472.00px;top:1056.21px;font-size:17px;line-height:17px;color:#cccccc;font-weight:400;font-style:normal;transform:scaleX(1.2);">UTF-8</div>
<div class="a" style="left:1556.00px;top:1056.21px;font-size:17px;line-height:17px;color:#cccccc;font-weight:400;font-style:normal;transform:scaleX(1.2);">LF</div>
<div class="a" style="left:1602.00px;top:1056.06px;font-size:16px;line-height:16px;color:#cccccc;font-weight:400;font-style:normal;transform:scaleX(1.0);white-space:pre;letter-spacing:1px;">{ }</div>
<div class="a" style="left:1632.50px;top:1056.21px;font-size:17px;line-height:17px;color:#cccccc;font-weight:400;font-style:normal;transform:scaleX(1.2);">JavaScript</div>
<div class="a" style="left:1749.60px;top:1056.21px;font-size:17px;line-height:17px;color:#777777;font-weight:400;font-style:normal;transform:scaleX(1.2);text-decoration:line-through;">Cursor Tab</div>
<svg class="a" style="left:1875px;top:1054px;" width="20" height="22" viewBox="0 0 20 22" fill="none"><path d="M10 2.5c-3.6 0-6 2.6-6 6v5l-2 3h16l-2-3v-5c0-3.4-2.4-6-6-6z" stroke="#cfcfcf" stroke-width="1.6" stroke-linejoin="round"/><path d="M7.5 18.5a2.5 2.5 0 0 0 5 0" stroke="#cfcfcf" stroke-width="1.6"/></svg>
<svg class="a" style="left:25px;top:864px;" width="223" height="193" viewBox="0 0 223 193">
<defs><clipPath id="cc"><ellipse cx="111.5" cy="96.5" rx="111" ry="96"/></clipPath>
<filter id="bl" x="-10%" y="-10%" width="120%" height="120%"><feGaussianBlur stdDeviation="2"/></filter>
<filter id="bl2" x="-20%" y="-20%" width="140%" height="140%"><feGaussianBlur stdDeviation="3.5"/></filter></defs>
<g clip-path="url(#cc)">
<rect x="0" y="0" width="223" height="193" fill="#c6a88f"/>
<g filter="url(#bl2)">
<rect x="130" y="0" width="100" height="55" fill="#cfb69e"/>
<rect x="120" y="52" width="110" height="20" fill="#d9c9b8"/>
<rect x="139" y="71" width="90" height="58" fill="#ddd1c3"/>
<ellipse cx="205" cy="90" rx="22" ry="12" fill="#d6a6a0"/>
<rect x="123" y="70" width="16" height="66" fill="#b49c8a"/>
<rect x="120" y="128" width="110" height="70" fill="#d5bf9f"/>
<rect x="0" y="62" width="32" height="100" fill="#cbb4a6"/>
<rect x="4" y="70" width="9" height="80" fill="#b06868"/>
<rect x="22" y="120" width="22" height="40" fill="#a84a52"/>
<rect x="18" y="75" width="8" height="40" fill="#d8c8b8"/>
</g>
<g filter="url(#bl)">
<path d="M20 200 L 28 150 C 40 140, 55 140, 62 150 L 60 200 Z" fill="#4f5d6e"/>
<path d="M108 200 L 112 140 C 140 138, 170 150, 185 168 L 200 200 Z" fill="#4e5c6d"/>
<path d="M58 150 L 115 148 L 118 200 L 58 200 Z" fill="#a27a6e"/>
<ellipse cx="80" cy="108" rx="49" ry="46" fill="#b07e6e"/>
<ellipse cx="50" cy="104" rx="16" ry="26" fill="#bc887a"/>
<ellipse cx="128" cy="100" rx="7" ry="22" fill="#8e6458"/>
<ellipse cx="118" cy="95" rx="6" ry="18" fill="#5e463c"/>
<ellipse cx="80" cy="76" rx="46" ry="6" fill="#5a4036"/>
<ellipse cx="48" cy="89" rx="12" ry="3.5" fill="#5c4036"/>
<ellipse cx="92" cy="89" rx="12" ry="3.5" fill="#5c4036"/>
<ellipse cx="70" cy="102" rx="9" ry="14" fill="#c89a8c"/>
<ellipse cx="76" cy="121" rx="24" ry="5.5" fill="#4a342e"/>
<ellipse cx="76" cy="131" rx="18" ry="4" fill="#a8706a"/>
<ellipse cx="80" cy="148" rx="34" ry="14" fill="#8c7264"/>
<path d="M10 64 C 14 44, 40 26, 72 24 C 105 22, 126 40, 130 78 C 105 72, 55 68, 10 66 Z" fill="#252e3a"/>
<path d="M80 28 C 104 26, 124 42, 128 76 L 84 72 Z" fill="#3a485a"/>
<ellipse cx="77" cy="29" rx="12" ry="6.5" fill="#d04858"/>
</g>
</g></svg></body></html>
